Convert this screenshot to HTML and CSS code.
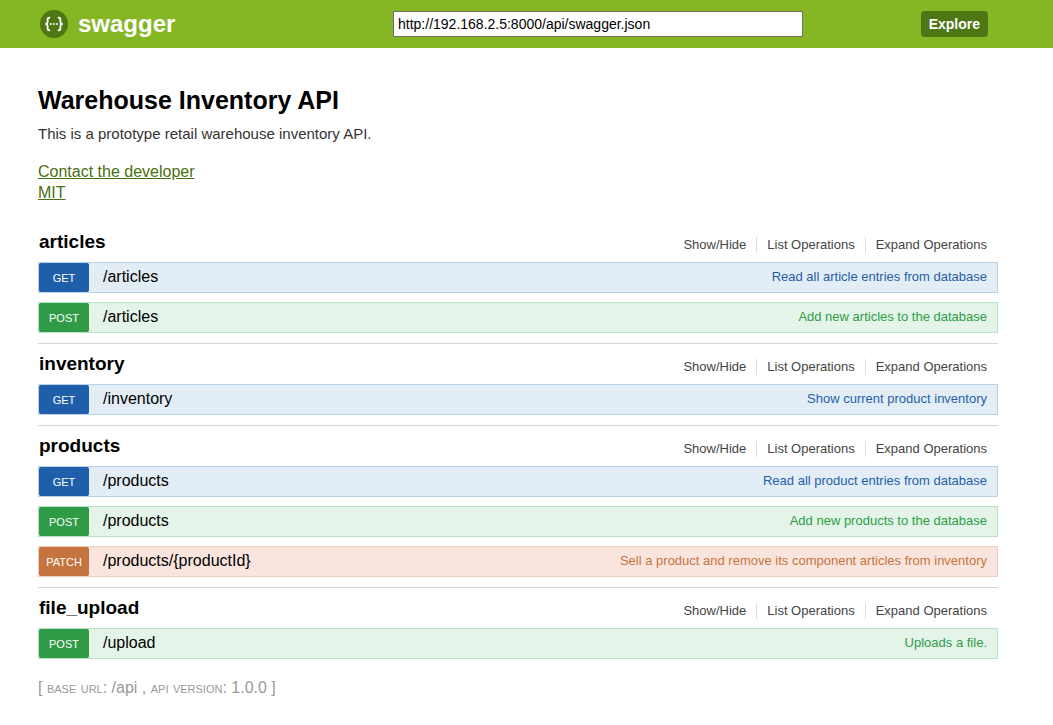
FILE: index.html
```html
<!DOCTYPE html>
<html lang="en">
<head>
<meta charset="utf-8">
<title>Swagger UI</title>
<link rel="stylesheet" href="styles.css">
</head>
<body>
<header class="header">
  <a class="logo" href="#">
    <svg class="logo-mark" viewBox="0 0 28 28" width="28" height="28" aria-hidden="true">
      <circle cx="14" cy="14" r="14" fill="#4d7615"/>
      <g fill="none" stroke="#fff" stroke-width="1.8">
        <path d="M10.2 7.700H9.500Q7.600 7.700 7.600 9.500V12Q7.600 14 5.300 14Q7.600 14 7.600 16V18.500Q7.600 20.300 9.500 20.300H10.200"/>
        <path d="M17.800 7.700H18.500Q20.400 7.700 20.400 9.500V12Q20.400 14 22.700 14Q20.400 14 20.400 16V18.500Q20.400 20.300 18.500 20.300H17.800"/>
      </g>
      <g fill="#fff"><circle cx="11" cy="14" r="1"/><circle cx="14" cy="14" r="1"/><circle cx="17" cy="14" r="1"/></g>
    </svg>
    <span>swagger</span>
  </a>
  <form class="selector">
    <input class="url" type="text" aria-label="API URL" value="http://192.168.2.5:8000/api/swagger.json">
    <button class="explore" type="button">Explore</button>
  </form>
</header>
<main class="content">
  <section class="info">
    <h1 class="title">Warehouse Inventory API</h1>
    <p class="description">This is a prototype retail warehouse inventory API.</p>
    <a class="info-link" href="#">Contact the developer</a>
    <a class="info-link" href="#">MIT</a>
  </section>

  <section class="resource">
    <div class="heading">
      <h2 class="name">articles</h2>
      <nav class="options"><a href="#">Show/Hide</a><a href="#">List Operations</a><a href="#">Expand Operations</a></nav>
    </div>
    <div class="operations">
      <a class="operation get" href="#"><span class="method">GET</span><span class="path">/articles</span><span class="summary">Read all article entries from database</span></a>
      <a class="operation post" href="#"><span class="method">POST</span><span class="path">/articles</span><span class="summary">Add new articles to the database</span></a>
    </div>
  </section>

  <section class="resource">
    <div class="heading">
      <h2 class="name">inventory</h2>
      <nav class="options"><a href="#">Show/Hide</a><a href="#">List Operations</a><a href="#">Expand Operations</a></nav>
    </div>
    <div class="operations">
      <a class="operation get" href="#"><span class="method">GET</span><span class="path">/inventory</span><span class="summary">Show current product inventory</span></a>
    </div>
  </section>

  <section class="resource">
    <div class="heading">
      <h2 class="name">products</h2>
      <nav class="options"><a href="#">Show/Hide</a><a href="#">List Operations</a><a href="#">Expand Operations</a></nav>
    </div>
    <div class="operations">
      <a class="operation get" href="#"><span class="method">GET</span><span class="path">/products</span><span class="summary">Read all product entries from database</span></a>
      <a class="operation post" href="#"><span class="method">POST</span><span class="path">/products</span><span class="summary">Add new products to the database</span></a>
      <a class="operation patch" href="#"><span class="method">PATCH</span><span class="path">/products/{productId}</span><span class="summary">Sell a product and remove its component articles from inventory</span></a>
    </div>
  </section>

  <section class="resource">
    <div class="heading">
      <h2 class="name">file_upload</h2>
      <nav class="options"><a href="#">Show/Hide</a><a href="#">List Operations</a><a href="#">Expand Operations</a></nav>
    </div>
    <div class="operations">
      <a class="operation post" href="#"><span class="method">POST</span><span class="path">/upload</span><span class="summary">Uploads a file.</span></a>
    </div>
  </section>

  <footer class="footer">[ <span class="label">base url</span>: /api , <span class="label">api version</span>: 1.0.0 ]</footer>
</main>
</body>
</html>
```
FILE: styles.css
```css
* {
  box-sizing: border-box;
}

body {
  margin: 0;
  background: #fff;
  color: #000;
  font-family: "Liberation Sans", Arial, sans-serif;
  font-size: 16px;
}

h1, h2, p {
  margin: 0;
}

.header {
  display: flex;
  align-items: center;
  justify-content: space-between;
  height: 48px;
  padding: 0 65px 0 40px;
  background: #85b724;
}

.logo {
  display: flex;
  align-items: center;
  gap: 10px;
  color: #fff;
  font-size: 24px;
  font-weight: bold;
  line-height: 28px;
  text-decoration: none;
}

.selector {
  display: flex;
  width: 63%;
  max-width: 595px;
  justify-content: space-between;
}

.url {
  width: 410px;
  height: 26px;
  padding: 0 4px;
  border: 1px solid #6c7563;
  background: #fff;
  color: #000;
  font: 14px "Liberation Sans", Arial, sans-serif;
}

.explore {
  height: 26px;
  padding: 0 8px;
  border: 0;
  border-radius: 4px;
  background: #4d7615;
  color: #fff;
  font: bold 14px "Liberation Sans", Arial, sans-serif;
}

.content {
  padding: 37px 55px 24px 38px;
}

.info {
  display: flex;
  flex-direction: column;
  align-items: flex-start;
  margin-bottom: 19px;
}

.title {
  font-size: 25px;
  line-height: 30px;
}

.description {
  margin: 9px 0 17px;
  color: #333;
  font-size: 15px;
  line-height: 20px;
}

.info-link {
  color: #4a7110;
  line-height: 21px;
}

.resource + .resource {
  border-top: 1px solid #d2d6d6;
}

.heading {
  display: flex;
  justify-content: space-between;
  height: 40px;
  padding: 9px 0 0 1px;
}

.name {
  font-size: 19px;
  line-height: 22px;
}

.options {
  display: flex;
  padding: 6px 1px 0 0;
}

.options a {
  height: 16px;
  padding: 0 10px;
  color: #444;
  font-size: 13px;
  line-height: 16px;
  text-decoration: none;
}

.options a + a {
  border-left: 1px solid #ddd;
}

.operations {
  display: grid;
  gap: 9px;
  padding-bottom: 10px;
}

.operation {
  display: flex;
  align-items: stretch;
  height: 31px;
  padding-right: 10px;
  border: 1px solid;
  line-height: 28px;
  text-decoration: none;
}

.method {
  width: 50px;
  border-radius: 2px;
  color: #fff;
  font-size: 11px;
  line-height: 30px;
  text-align: center;
}

.path {
  flex: 1;
  padding-left: 14px;
  color: #000;
}

.summary {
  font-size: 13px;
}

.get {
  border-color: #b9d2e8;
  background: #e3edf5;
  color: #1f5fa9;
}

.get .method {
  background: #1f5fa9;
}

.post {
  border-color: #b9e1c6;
  background: #e4f4e8;
  color: #2e9d48;
}

.post .method {
  background: #2f9b46;
}

.patch {
  border-color: #f0cebb;
  background: #fae5de;
  color: #c5743f;
}

.patch .method {
  background: #c5743f;
}

.footer {
  margin-top: 9px;
  color: #999;
  line-height: 20px;
}

.label {
  font-variant: small-caps;
}
```
